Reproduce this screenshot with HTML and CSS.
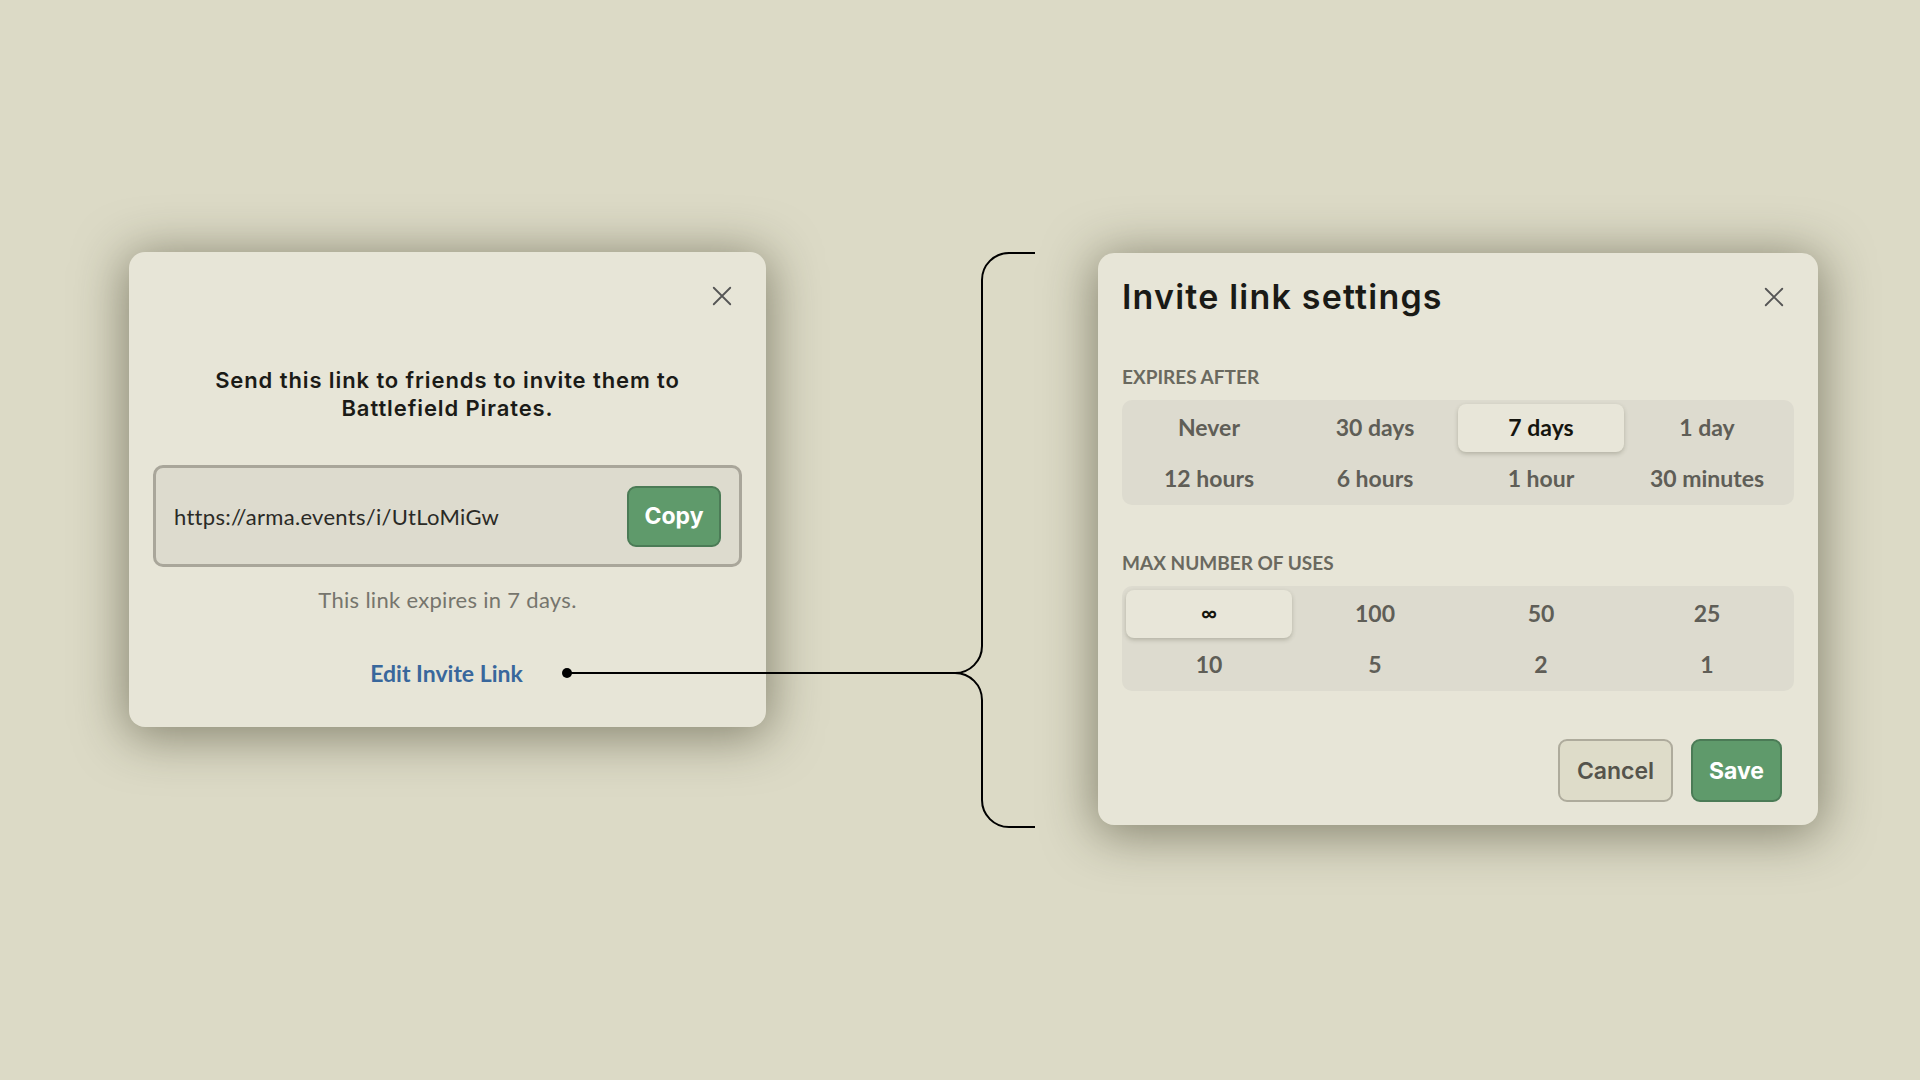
FILE: index.html
```html
<!DOCTYPE html>
<html lang="en">
<head>
<meta charset="utf-8">
<title>Invite link</title>
<link rel="stylesheet" href="styles.css">
</head>
<body>
<div class="stage">
  <section class="dialog invite">
    <div class="dialog-top">
      <button class="close" aria-label="Close">
        <svg viewBox="0 0 24 24" width="22" height="22"><path d="M3 3 L21 21 M21 3 L3 21" stroke="#555" stroke-width="2" fill="none" stroke-linecap="round"/></svg>
      </button>
    </div>
    <p class="invite-msg">Send this link to friends to invite them to Battlefield Pirates.</p>
    <div class="link-box">
      <span class="link-url">https://arma.events/i/UtLoMiGw</span>
      <button class="btn btn-green copy">Copy</button>
    </div>
    <p class="expires">This link expires in 7 days.</p>
    <a class="edit-link" href="#">Edit Invite Link</a>
  </section>

  <div class="gap"></div>

  <section class="dialog settings">
    <div class="settings-head">
      <h1 class="settings-title">Invite link settings</h1>
      <button class="close" aria-label="Close">
        <svg viewBox="0 0 24 24" width="22" height="22"><path d="M3 3 L21 21 M21 3 L3 21" stroke="#555" stroke-width="2" fill="none" stroke-linecap="round"/></svg>
      </button>
    </div>
    <h2 class="field-label first">EXPIRES AFTER</h2>
    <div class="segments">
      <div class="seg">Never</div>
      <div class="seg">30 days</div>
      <div class="seg active">7 days</div>
      <div class="seg">1 day</div>
      <div class="seg">12 hours</div>
      <div class="seg">6 hours</div>
      <div class="seg">1 hour</div>
      <div class="seg">30 minutes</div>
    </div>
    <h2 class="field-label">MAX NUMBER OF USES</h2>
    <div class="segments">
      <div class="seg active inf">∞</div>
      <div class="seg">100</div>
      <div class="seg">50</div>
      <div class="seg">25</div>
      <div class="seg">10</div>
      <div class="seg">5</div>
      <div class="seg">2</div>
      <div class="seg">1</div>
    </div>
    <div class="actions">
      <button class="btn btn-plain">Cancel</button>
      <button class="btn btn-green">Save</button>
    </div>
  </section>

  <svg class="connector" width="1920" height="1080" viewBox="0 0 1920 1080">
    <circle cx="567" cy="673" r="5" fill="#000"/>
    <path d="M567 673 H955 A27 27 0 0 0 982 646 V280 A27 27 0 0 1 1009 253 H1035" stroke="#000" stroke-width="2" fill="none"/>
    <path d="M955 673 A27 27 0 0 1 982 700 V800 A27 27 0 0 0 1009 827 H1035" stroke="#000" stroke-width="2" fill="none"/>
  </svg>
</div>
</body>
</html>
```

FILE: styles.css
```css
* { box-sizing: border-box; }
html, body { margin: 0; padding: 0; }
body {
  background: #dcdac6;
  width: 1920px;
  height: 1080px;
  overflow: hidden;
  font-family: Lato, "Liberation Sans", sans-serif;
}
.stage {
  position: relative;
  width: 1920px;
  height: 1080px;
  display: flex;
  align-items: flex-start;
  padding: 252px 0 0 129px;
}
.dialog {
  background: #e7e5d7;
  border-radius: 16px;
  box-shadow: 0 6px 50px 4px rgba(50, 48, 25, 0.5);
  padding: 24px;
}
.invite {
  width: 637px;
  height: 475px;
  display: flex;
  flex-direction: column;
  align-items: center;
}
.gap { width: 332px; flex: none; }
.settings {
  width: 720px;
  height: 572px;
  margin-top: 1px;
  display: flex;
  flex-direction: column;
}
.dialog-top {
  align-self: stretch;
  display: flex;
  justify-content: flex-end;
  height: 40px;
}
.close {
  width: 40px;
  height: 40px;
  border: 0;
  background: transparent;
  padding: 0;
  display: flex;
  align-items: center;
  justify-content: center;
  cursor: pointer;
}
.invite-msg {
  margin: 50px 0 0;
  width: 520px;
  text-align: center;
  font-family: Inter, Lato, sans-serif;
  font-weight: 600;
  font-size: 22px;
  line-height: 28px;
  color: #1b1b17;
  letter-spacing: 0.9px;
}
.link-box {
  margin-top: 43px;
  align-self: stretch;
  height: 102px;
  border: 3px solid #a9a69a;
  border-radius: 10px;
  background: #dddbce;
  padding: 18px;
  display: flex;
  align-items: center;
  justify-content: space-between;
}
.link-url {
  font-size: 22px;
  letter-spacing: 0.3px;
  color: #2a2a26;
}
.btn {
  font-family: Inter, Lato, sans-serif;
  font-weight: 700;
  font-size: 23px;
  border-radius: 9px;
  cursor: pointer;
}
.btn-green {
  background: #5f9a6b;
  border: 2px solid #4b7b56;
  color: #fff;
}
.copy { width: 94px; height: 61px; padding: 0; }
.expires {
  margin: 21px 0 0;
  font-size: 22px;
  letter-spacing: 0.3px;
  line-height: 24px;
  color: #76756d;
}
.edit-link {
  margin-top: 49px;
  font-size: 23px;
  line-height: 24px;
  font-weight: 700;
  color: #39679c;
  text-decoration: none;
  margin-right: 2px;
}
.settings-head {
  display: flex;
  justify-content: space-between;
  align-items: center;
  height: 40px;
}
.settings-title {
  margin: 0;
  font-family: Inter, Lato, sans-serif;
  font-weight: 600;
  font-size: 34px;
  line-height: 40px;
  color: #1a1a16;
  letter-spacing: 1.2px;
}
.field-label {
  margin: 47px 0 0;
  font-size: 19px;
  line-height: 22px;
  font-weight: 700;
  color: #6a695f;
}
.field-label.first { margin-top: 49px; }
.segments {
  margin-top: 12px;
  background: #dddbcf;
  border-radius: 10px;
  padding: 4px 4px 2px;
  display: grid;
  grid-template-columns: repeat(4, 1fr);
  grid-auto-rows: 48px;
  row-gap: 3px;
}
.seg {
  display: flex;
  align-items: center;
  justify-content: center;
  padding-bottom: 3px;
  font-size: 23px;
  font-weight: 700;
  color: #5f5e57;
  border-radius: 8px;
}
.seg.active {
  background: #e8e6d9;
  color: #15150f;
  box-shadow: 0 2px 4px rgba(60, 58, 40, 0.25);
}
.seg.inf { font-size: 22px; }
.actions {
  margin-top: 48px;
  display: flex;
  justify-content: flex-end;
  gap: 18px;
  padding-right: 12px;
}
.actions .btn { height: 63px; }
.btn-plain {
  width: 115px;
  background: #dedcc9;
  border: 2px solid #aeab9c;
  color: #55544c;
  font-weight: 600;
}
.actions .btn-green { width: 91px; }
.connector {
  position: absolute;
  left: 0;
  top: 0;
  pointer-events: none;
}
```
